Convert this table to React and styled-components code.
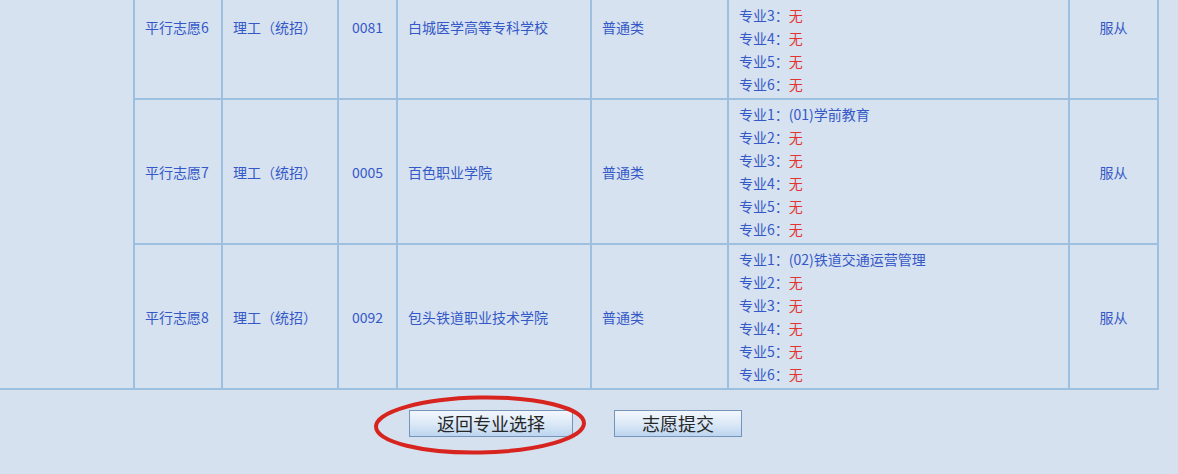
import React from "react";
import styled, { createGlobalStyle } from "styled-components";

const Global = createGlobalStyle`
  html, body { margin: 0; padding: 0; background: #d5e1ee; overflow: hidden; }
  body { font-family: "Noto Sans CJK SC", "Noto Sans", sans-serif; }
`;

const Page = styled.div`
  width: 1163px;
  margin-left: -6px;
  margin-top: -47px;
  display: flex;
  flex-direction: column;
`;

const Table = styled.table`
  width: 100%;
  table-layout: fixed;
  border-collapse: collapse;
  background: #d6e2ef;
`;

const Cell = styled.td`
  border: 2px solid #9dc0e0;
  padding: 3px 0 2px ${(p) => (p.$align === "center" ? 0 : 10)}px;
  text-align: ${(p) => p.$align || "left"};
  vertical-align: middle;
  color: #3558c8;
  font-size: 14px;
  line-height: 23px;
  white-space: nowrap;
`;

const Line = styled.div`
  height: 23px;
  line-height: 23px;
`;

const None = styled.span`
  color: #e3352f;
`;

const Footer = styled.div`
  display: flex;
  justify-content: center;
  gap: 41px;
  padding: 20px 0 40px 0;
`;

const BtnWrap = styled.div`
  position: relative;
  display: flex;
`;

const Button = styled.button`
  width: ${(p) => p.$w}px;
  height: 27px;
  border: 1px solid #7594bb;
  background: linear-gradient(#f3f7fc 0%, #dce9f7 50%, #bdd5ef 100%);
  font-family: "Noto Sans CJK SC", sans-serif;
  font-size: 18px;
  line-height: 25px;
  color: #262626;
  padding: 0;
`;

const Circle = styled.svg`
  position: absolute;
  left: -37px;
  top: -16px;
  width: 216px;
  height: 62px;
  overflow: visible;
  pointer-events: none;
`;

const rows = [
  {
    name: "平行志愿6",
    code: "0081",
    school: "白城医学高等专科学校",
    majors: [null, null, null, null, null, null],
  },
  {
    name: "平行志愿7",
    code: "0005",
    school: "百色职业学院",
    majors: ["(01)学前教育", null, null, null, null, null],
  },
  {
    name: "平行志愿8",
    code: "0092",
    school: "包头铁道职业技术学院",
    majors: ["(02)铁道交通运营管理", null, null, null, null, null],
  },
];

export default function App() {
  return (
    <>
      <Global />
      <Page>
        <Table>
          <colgroup>
            <col style={{ width: 139 }} />
            <col style={{ width: 88 }} />
            <col style={{ width: 116 }} />
            <col style={{ width: 59 }} />
            <col style={{ width: 194 }} />
            <col style={{ width: 137 }} />
            <col style={{ width: 341 }} />
            <col style={{ width: 89 }} />
          </colgroup>
          <tbody>
            {rows.map((r, i) => (
              <tr key={r.name}>
                {i === 0 && <Cell rowSpan={3} $align="center" />}
                <Cell>{r.name}</Cell>
                <Cell>理工（统招）</Cell>
                <Cell $align="center">{r.code}</Cell>
                <Cell>{r.school}</Cell>
                <Cell>普通类</Cell>
                <Cell>
                  {r.majors.map((m, j) => (
                    <Line key={j}>
                      专业{j + 1}：{m ? m : <None>无</None>}
                    </Line>
                  ))}
                </Cell>
                <Cell $align="center">服从</Cell>
              </tr>
            ))}
          </tbody>
        </Table>
        <Footer>
          <BtnWrap>
            <Button $w={164}>返回专业选择</Button>
            <Circle viewBox="0 0 216 62">
              <ellipse
                cx="108"
                cy="31"
                rx="104"
                ry="27.5"
                fill="none"
                stroke="#d8241f"
                strokeWidth="4"
                transform="rotate(-1 108 31)"
              />
            </Circle>
          </BtnWrap>
          <BtnWrap>
            <Button $w={128}>志愿提交</Button>
          </BtnWrap>
        </Footer>
      </Page>
    </>
  );
}
